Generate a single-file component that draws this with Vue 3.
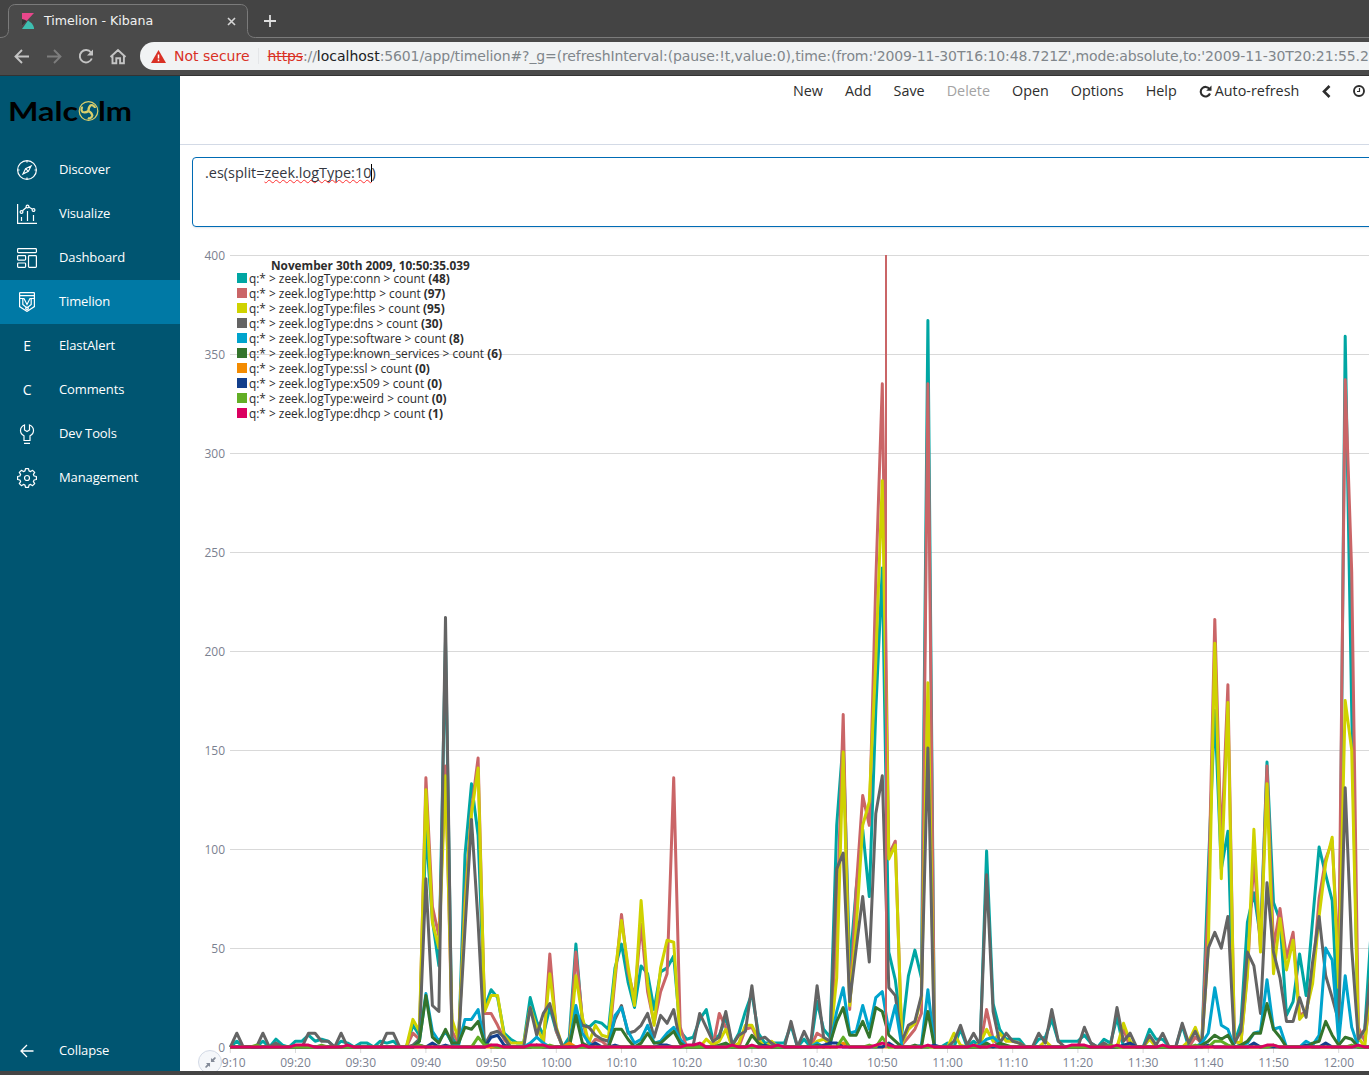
<script setup>
const links = [
  { name: 'Discover', icon: 'compass' },
  { name: 'Visualize', icon: 'chart' },
  { name: 'Dashboard', icon: 'dashboard' },
  { name: 'Timelion', icon: 'timelion', active: true },
  { name: 'ElastAlert', letter: 'E' },
  { name: 'Comments', letter: 'C' },
  { name: 'Dev Tools', icon: 'wrench' },
  { name: 'Management', icon: 'gear' },
]
const actions = ['New', 'Add', 'Save', 'Delete', 'Open', 'Options', 'Help']

// Sparse series: "minute:value" pairs counted from 09:10, everything else is zero.
const series = [
  { name: 'conn', color: '#00a6a3', n: 48, d: '1:3 5:3 7:4 8:1 10:3 11:3 12:6 13:3 14:4 15:3 17:3 18:2 20:2 21:2 23:3 24:2 25:3 28:11 29:6 30:110 31:64 32:41 33:205 34:5 36:97 37:133 38:107 39:20 40:29 41:25 42:7 43:4 44:2 45:2 46:25 47:13 48:6 49:20 50:8 52:5 53:52 54:12 55:10 56:13 57:12 58:9 59:40 60:52 61:33 62:20 63:41 64:37 65:19 66:38 67:40 68:46 69:8 70:4 71:5 72:14 73:19 74:4 75:6 76:15 77:1 78:7 79:18 80:27 81:7 82:2 83:2 84:2 85:2 86:11 88:4 90:23 91:9 92:5 93:112 94:155 95:40 96:80 97:110 98:76 99:170 100:242 101:48 102:34 103:7 104:36 105:49 106:35 107:367 110:2 112:9 114:3 116:99 117:22 118:9 119:4 120:4 121:4 124:4 125:5 126:14 127:3 128:3 129:3 130:3 131:6 132:2 134:4 135:2 136:15 138:2 141:9 142:4 143:4 146:11 149:1 150:90 151:170 152:90 153:109 154:2 155:12 156:63 157:78 158:55 159:144 160:73 161:64 162:16 163:23 164:47 165:26 166:64 167:101 168:87 169:74 170:4 171:359 172:170 173:3 174:9 175:60' },
  { name: 'http', color: '#ca6567', n: 97, d: '28:7 29:4 30:136 31:71 32:56 33:142 34:8 35:2 36:75 37:120 38:146 39:17 40:17 41:11 42:4 49:47 50:8 53:48 54:14 56:4 57:3 59:34 60:67 61:38 62:25 63:62 64:28 65:12 66:28 67:37 68:136 69:10 75:17 76:10 79:9 80:10 81:3 90:7 91:5 93:60 94:168 95:19 96:80 97:127 98:112 99:235 100:335 101:97 102:104 103:1 104:5 105:9 106:17 107:335 116:19 117:4 137:9 148:5 149:2 150:73 151:216 152:100 153:183 154:3 155:2 156:38 157:95 158:50 159:142 160:50 161:70 162:45 163:58 164:16 165:18 166:35 167:75 168:95 169:104 170:40 171:337 172:240 173:10 174:3 175:30' },
  { name: 'files', color: '#cfd200', n: 95, d: '28:14 29:8 30:130 31:63 32:50 33:137 34:14 35:4 36:70 37:118 38:141 39:18 40:26 41:26 42:6 43:2 44:2 45:2 46:20 47:10 48:3 49:37 50:10 53:36 54:15 55:2 56:11 57:6 58:5 59:37 60:64 61:41 62:21 63:74 64:32 65:11 66:40 67:54 68:53 69:3 73:4 74:1 75:3 76:9 78:2 79:11 80:11 81:4 83:3 90:3 91:4 92:2 93:35 94:149 95:21 96:60 97:112 98:124 99:195 100:286 101:95 102:102 103:2 104:9 105:12 106:25 107:184 111:7 112:1 115:2 116:9 117:3 118:7 119:3 120:3 121:2 125:3 137:12 138:3 141:4 147:3 148:10 149:1 150:50 151:204 152:85 153:174 154:3 155:2 156:36 157:110 158:48 159:133 160:37 161:65 162:39 163:54 164:14 165:18 166:32 167:66 168:93 169:106 170:30 171:175 172:150 173:5 175:40' },
  { name: 'dns', color: '#646464', n: 30, d: '1:7 5:7 7:2 12:7 13:7 14:3 15:3 17:7 24:7 25:7 28:1 29:4 30:85 31:21 32:18 33:217 34:1 35:2 36:60 37:115 38:63 39:1 40:7 41:8 42:5 46:20 47:6 48:17 49:22 50:9 52:2 53:18 54:11 55:10 56:6 57:4 58:3 59:14 60:21 61:7 62:8 63:11 64:17 65:5 66:16 67:12 68:19 69:2 71:1 72:17 73:10 74:3 75:5 76:18 77:1 78:6 79:8 80:31 81:4 82:5 83:2 86:13 88:8 89:1 90:31 91:5 92:3 93:90 94:98 95:23 96:50 97:76 98:43 99:118 100:137 101:30 102:26 103:3 104:11 105:13 106:26 107:151 111:3 112:11 113:1 114:7 115:1 116:87 117:18 118:2 119:7 120:3 121:2 124:7 125:2 126:19 127:3 131:10 132:2 134:2 136:20 137:3 138:7 141:6 142:1 143:7 146:12 147:2 148:8 149:1 150:50 151:58 152:50 153:66 154:2 155:8 156:48 157:41 158:17 159:83 160:48 161:35 162:13 163:13 164:25 165:15 166:43 167:66 168:36 169:25 170:13 171:131 172:50 173:4 174:9 175:40' },
  { name: 'software', color: '#00a4cd', n: 8, d: '29:3 30:27 31:8 32:3 33:8 34:2 35:1 36:14 37:14 38:19 39:2 46:2 47:5 48:2 53:21 54:7 55:2 59:16 60:20 61:8 62:2 63:4 64:11 65:2 66:3 67:7 68:10 69:4 90:2 92:1 93:18 94:30 95:7 96:8 97:21 98:9 99:25 100:28 101:8 102:21 106:1 107:29 115:1 116:4 117:5 118:2 149:2 150:7 151:30 152:11 153:9 155:1 156:2 157:7 158:8 159:34 160:9 161:10 165:3 166:1 167:6 168:50 169:44 170:3 171:36 172:10' },
  { name: 'known_services', color: '#34742c', n: 6, d: '29:3 30:26 31:5 32:2 33:9 34:2 35:2 36:10 37:9 38:13 39:2 53:16 54:2 59:9 60:9 61:4 63:2 64:7 65:2 66:2 67:5 68:8 69:2 75:1 76:2 80:6 81:2 90:1 92:2 93:13 94:20 95:6 96:6 97:13 98:5 99:20 100:18 101:6 102:3 105:1 107:18 116:2 118:2 119:1 149:1 150:3 151:6 152:4 153:6 155:1 156:3 157:7 158:7 159:22 160:9 161:5 166:2 167:3 168:13 169:6 170:1 171:5 172:4' },
  { name: 'ssl', color: '#f38b00', n: 0, d: '47:1 52:2 94:2' },
  { name: 'x509', color: '#133f8c', n: 0, d: '29:1 31:2 33:1 40:5 41:6 42:1 47:1 56:2 59:1 66:1 67:1 82:1 91:1 92:2 93:2 101:2 108:1 137:1 138:2 150:1 157:2 165:1 168:2' },
  { name: 'weird', color: '#62ae25', n: 0, d: '4:1 14:1 29:1 38:5 39:1 40:1 49:1 94:5 98:1 100:5 117:1 135:1 148:1 151:3 152:3 153:1 160:1 172:1' },
  { name: 'dhcp', color: '#db0060', n: 1, d: '10:1 11:1 12:1 18:1 40:1 41:1 46:1 47:1 48:1 54:1 70:1 71:1 72:2 77:1 80:1 84:1 99:1 100:2 101:1 107:1 114:1 117:1 129:1 130:1 131:1 136:1 143:1 159:1 160:1 173:1' },
]
const ticks = Array.from({ length: 18 }, (_, i) => i)
const yValues = [400, 350, 300, 250, 200, 150, 100, 50, 0]
const px = (m) => 50.3 + m * 6.52
const py = (v) => 819.5 - v * 1.98
const clock = (i) => {
  const m = 550 + i * 10
  return String(Math.floor(m / 60)).padStart(2, '0') + ':' + String(m % 60).padStart(2, '0')
}
function points(text) {
  const values = Array(176).fill(0)
  text.split(' ').forEach((p) => {
    const [m, v] = p.split(':')
    values[m] = +v
  })
  return values.map((v, m) => px(m).toFixed(1) + ',' + (py(v) - 0.4).toFixed(1)).join(' ')
}
</script>

<template>
  <div class="window">
    <header class="browser">
      <div class="tabs">
        <svg class="tab-outline" width="1369" height="38" viewBox="0 0 1369 38" fill="none">
          <path d="M0 37.500c5.500 0 8.500-2.500 8.500-8V12c0-5 2.500-7.500 7.500-7.500h224c5 0 7.500 2.500 7.500 7.500v17.500c0 5.500 3 8 8 8H1369V38H0z" fill="#4a4a4a" />
          <path d="M0 37.500c5.500 0 8.500-2.500 8.500-8V12c0-5 2.500-7.500 7.500-7.500h224c5 0 7.500 2.500 7.500 7.500v17.500c0 5.500 3 8 8 8H1369" stroke="#7b7b7b" />
        </svg>
        <svg class="favicon" width="12" height="16" viewBox="0 0 12 16"><path d="M0 0h12L0 13z" fill="#e8478b" /><path d="M0 6a16 16 0 0 1 5 2L0 13z" fill="#353535" /><path d="M6 7.500c3.500 2 6 5 6.200 8.500H0z" fill="#3ebeb0" /></svg>
        <span class="tab-title">Timelion - Kibana</span>
        <svg class="tab-close" width="9" height="9" viewBox="0 0 9 9"><path d="M1 1l7 7M8 1L1 8" stroke="#d6d6d6" stroke-width="1.600" /></svg>
        <svg class="tab-new" width="12" height="12" viewBox="0 0 12 12"><path d="M6 0v12M0 6h12" stroke="#dedede" stroke-width="1.800" /></svg>
      </div>
      <div class="toolbar">
        <svg width="128" height="18" viewBox="0 0 128 18" fill="none" stroke="#c4c4c4" stroke-width="1.900">
          <path d="M23 8.500H10M16 2L9.500 8.500 16 15" />
          <path d="M41 8.500h13M48 2l6.500 6.500L48 15" stroke="#7d7d7d" />
          <path d="M85 4.500a6.200 6.200 0 1 0 .8 6" /><path d="M87 1.500v6h-6z" fill="#c4c4c4" stroke="none" />
          <path d="M104.500 9L112 2l7.500 7M106.500 8v7.200h3.800v-5h3.800v5h3.800V8" />
        </svg>
        <div class="address">
          <svg width="15" height="13" viewBox="0 0 15 13"><path d="M7.500 0L15 13H0z" fill="#d93025" /><path d="M7.500 4.500v4M7.500 9.600v1.600" stroke="#fff" stroke-width="1.500" /></svg>
          <span class="insecure">Not secure</span>
          <i></i>
          <span class="url"><s>https</s>://<b>localhost</b>:5601/app/timelion#?_g=(refreshInterval:(pause:!t,value:0),time:(from:'2009-11-30T16:10:48.721Z',mode:absolute,to:'2009-11-30T20:21:55.2</span>
        </div>
      </div>
    </header>

    <div class="app">
      <aside class="sidebar">
        <svg class="logo" width="122" height="26" viewBox="0 0 122 26">
          <text x="-1" y="21" textLength="70" lengthAdjust="spacingAndGlyphs">Malc</text>
          <text x="89" y="21" textLength="34" lengthAdjust="spacingAndGlyphs">lm</text>
          <g transform="translate(79.500 11)" fill="none" stroke="#d9cf6c" stroke-width="1.200">
            <circle r="9.300" />
            <path v-for="a in [20, 140, 260]" :key="a" :transform="`rotate(${a})`" d="M0 0C-1-2-1-4 0-6C2-7.500 4.500-6.500 5-5" stroke-width="2.200" />
          </g>
        </svg>
        <nav>
          <a v-for="l in links" :key="l.name" :class="{ active: l.active }">
            <span class="icon" :class="{ letter: l.letter }">
              <template v-if="l.letter">{{ l.letter }}</template>
              <svg v-else width="20" height="20" viewBox="0 0 20 20" fill="none" stroke="#fff" stroke-width="1.200">
                <template v-if="l.icon === 'compass'"><circle cx="10" cy="10" r="9.400" /><path d="M14 6l-2.600 5.400L6 14l2.600-5.400zM8.600 8.600l2.800 2.800M10 .8v1.700M10 17.500v1.700M.8 10h1.700M17.500 10h1.700" /></template>
                <template v-if="l.icon === 'chart'"><path d="M.6 0v19.400H20M4.500 17v-4M10.500 17V7M16.500 17v-6M5.500 6.800l3.700-3.300M11.800 3l3.400 2" /><circle cx="4.500" cy="8" r="1.400" /><circle cx="10.500" cy="2.500" r="1.400" /><circle cx="16.500" cy="6" r="1.400" /></template>
                <template v-if="l.icon === 'dashboard'"><rect x=".6" y=".6" width="18.800" height="4" rx=".8" /><rect x=".6" y="7.600" width="8" height="4.500" rx=".8" /><rect x=".6" y="15" width="8" height="4.400" rx=".8" /><rect x="11.500" y="7.600" width="7.900" height="11.800" rx=".8" /></template>
                <template v-if="l.icon === 'timelion'"><path d="M2.600.6h14.800M2.600.6v14L10 19.400l7.400-4.800V.6M2.600 3.600h14.800M3 6.500h4l3 6 3-6h4M5.800 7v5.500l4.200 3.500 4.200-3.500V7" /><circle cx="10" cy="16.500" r="1.300" /></template>
                <template v-if="l.icon === 'wrench'"><path d="M7.500 1v5l2.500 1.500L12.500 6V1c2.500 1 4 3.200 4 5.500 0 2.500-1.500 4.300-3.500 5.300v4.700H7v-4.700c-2-1-3.500-2.800-3.500-5.300 0-2.300 1.500-4.500 4-5.500zM7 19.400h6" /></template>
                <template v-if="l.icon === 'gear'"><path d="M8.500.6h3l.5 2.300 1.600.7 2-1.300 2.100 2.100-1.300 2 .7 1.600 2.300.5v3l-2.300.5-.7 1.600 1.300 2-2.100 2.100-2-1.300-1.600.7-.5 2.300h-3L8 17.100l-1.600-.7-2 1.300-2.100-2.100 1.300-2-.7-1.600-2.300-.5v-3L2.900 8l.7-1.600-1.300-2 2.100-2.100 2 1.300L8 2.900z" stroke-linejoin="round" /><circle cx="10" cy="10" r="2.500" /></template>
              </svg>
            </span>
            <span>{{ l.name }}</span>
          </a>
        </nav>
        <a class="collapse">
          <span class="icon"><svg width="14" height="14" viewBox="0 0 14 14" fill="none" stroke="#fff" stroke-width="1.300"><path d="M13.500 7H1M7 1L1 7l6 6" /></svg></span>
          <span>Collapse</span>
        </a>
      </aside>

      <main>
        <div class="menu">
          <span v-for="a in actions" :key="a" :class="{ disabled: a === 'Delete' }">{{ a }}</span>
          <span class="refresh">
            <svg width="13" height="13" viewBox="0 0 13 13"><path d="M10.500 4A4.800 4.800 0 1 0 11 8.500" fill="none" stroke="#2d2d2d" stroke-width="2.100" /><path d="M12.500.5v5.300H7.200z" fill="#2d2d2d" /></svg>Auto-refresh
          </span>
          <svg width="9" height="13" viewBox="0 0 9 13"><path d="M7.500 1L2 6.500 7.500 12" fill="none" stroke="#2d2d2d" stroke-width="2.600" /></svg>
          <svg class="time" width="12" height="12" viewBox="0 0 12 12" fill="none" stroke="#2d2d2d"><circle cx="6" cy="6" r="5" stroke-width="1.900" /><path d="M6.500 3v3.500H4" stroke-width="1.200" /></svg>
        </div>
        <div class="expression">.es(split=<u>zeek.logType:10</u><i></i>)</div>

        <div class="plot">
          <svg width="1189" height="843" viewBox="0 0 1189 843">
            <g class="axis">
              <g v-for="v in yValues" :key="v">
                <path :d="`M50 ${py(v)}H1189`" stroke="#d9d9d9" />
                <text x="45" :y="py(v) + 4.500" text-anchor="end">{{ v }}</text>
              </g>
              <g v-for="t in ticks" :key="t">
                <path :d="`M${px(t * 10)} 820v5`" stroke="#d9d9d9" />
                <text :x="px(t * 10)" y="839" text-anchor="middle">{{ clock(t) }}</text>
              </g>
            </g>
            <polyline v-for="s in series" :key="s.name" :points="points(s.d)" fill="none" :stroke="s.color" stroke-width="3" stroke-linejoin="round" />
            <path d="M706 27V820" stroke="#ca6567" stroke-width="2" />
          </svg>
          <div class="legend">
            <strong>November 30th 2009, 10:50:35.039</strong>
            <div v-for="s in series" :key="s.name" class="entry">
              <i :style="{ background: s.color }"></i>
              <span>q:* &gt; zeek.logType:{{ s.name }} &gt; count <b>({{ s.n }})</b></span>
            </div>
          </div>
          <div class="shrink">
            <svg width="11" height="11" viewBox="0 0 12 12" fill="#848b98"><path d="M6.500 1v4.500H11L9.500 4 12 1.200 10.800 0 8 2.500zM5.500 11V6.500H1L2.500 8 0 10.800 1.200 12 4 9.500z" /></svg>
          </div>
        </div>
      </main>
    </div>
    <footer></footer>
  </div>
</template>

<style>
body { margin: 0; overflow: hidden; }
</style>

<style scoped>
.window { width: 1369px; height: 1075px; overflow: hidden; display: flex; flex-direction: column; background: #fff; font-family: "Open Sans", sans-serif; }
.browser { height: 76px; flex: none; box-sizing: border-box; background: #4a4a4a; border-bottom: 1px solid #333; font-family: "DejaVu Sans", sans-serif; }
.tabs { position: relative; height: 38px; display: flex; align-items: center; background: #444; }
.tab-outline { position: absolute; left: 0; top: 0; }
.tabs > :not(.tab-outline) { position: relative; }
.favicon { margin: 4px 0 0 22px; }
.tab-title { width: 183px; margin: 3px 0 0 10px; font-size: 12.6px; color: #f1f1f1; white-space: nowrap; }
.tab-close { margin-top: 4px; }
.tab-new { margin: 4px 0 0 28px; }
.toolbar { height: 37px; display: flex; align-items: center; }
.toolbar > svg { margin-left: 6px; flex: none; }
.address { margin-left: 6px; margin-top: -1px; flex: 1; height: 28px; min-width: 0; display: flex; align-items: center; box-sizing: border-box; padding-left: 11px; overflow: hidden; white-space: nowrap; background: #f1f3f4; border-radius: 14px 0 0 14px; font-size: 14px; color: #80868b; }
.address > * { flex: none; }
.insecure { margin-left: 8px; color: #d93025; }
.address i { width: 1px; height: 16px; margin: 0 9px 0 8px; background: #e4e6e8; }
.url { letter-spacing: -0.118px; }
.url s { color: #d93025; }
.url b { font-weight: 400; color: #202124; letter-spacing: 0; }
.app { display: flex; height: 995px; flex: none; }
.sidebar { width: 180px; flex: none; display: flex; flex-direction: column; background: #005571; color: #fff; font-size: 13px; letter-spacing: -0.12px; }
.logo { margin: 24px 0 22px 9px; overflow: visible; }
.logo text { font: 700 27px "Lato", sans-serif; fill: #000; letter-spacing: 0; }
.sidebar a { height: 44px; display: flex; align-items: center; box-sizing: border-box; padding-bottom: 2px; }
.sidebar a .icon { padding-top: 1px; }
.sidebar a .letter { padding-top: 0; font-size: 14px; }
.sidebar a.active { background: #0079a5; }
.sidebar .icon { width: 54px; display: flex; justify-content: center; margin-right: 5px; }
.sidebar .collapse { margin-top: auto; margin-bottom: -2px; }
main { flex: 1; min-width: 0; overflow: hidden; display: flex; flex-direction: column; }
.menu { height: 69px; flex: none; display: flex; align-items: flex-start; padding: 5px 0 0 613px; box-sizing: border-box; border-bottom: 1px solid #d3dae6; font-size: 14.35px; line-height: 20px; color: #2d2d2d; white-space: nowrap; }
.menu > * { flex: none; margin-right: 22px; }
.menu svg { margin-top: 4px; }
.disabled { color: #a3a3a3; }
.refresh { display: flex; gap: 3px; }
.menu .refresh { margin-right: 23px; }
.menu .time { margin-right: 0; }
.expression { flex: none; margin: 12px 0 0 12px; width: 1200px; height: 70px; box-sizing: border-box; border: 1px solid #006bb4; border-radius: 4px; padding: 4px 12px; font-size: 14.45px; line-height: 21px; color: #343741; box-shadow: 0 2px 2px -1px rgba(152, 162, 179, .3); }
.expression u { text-decoration: underline wavy #f33 1px; text-decoration-skip-ink: none; text-underline-offset: 1px; }
.expression i { display: inline-block; width: 1px; height: 18px; margin-right: -1px; vertical-align: -4px; background: #000; }
.plot { position: relative; height: 843px; overflow: hidden; margin-top: 1px; }
.plot > svg { display: block; }
.axis text { font-size: 12px; fill: #7b8190; }
.legend { position: absolute; left: 57px; top: 31px; display: flex; flex-direction: column; font-size: 11.87px; color: #2d2d2d; white-space: nowrap; }
.legend strong { margin-left: 34px; height: 12px; line-height: 13px; font-size: 11.8px; }
.entry { height: 15px; display: flex; align-items: center; gap: 2px; line-height: 15px; }
.entry i { width: 10px; height: 10px; margin-bottom: 1px; }
.shrink { position: absolute; left: 18px; top: 822px; width: 24px; height: 24px; box-sizing: border-box; border: 1px solid #d3dae6; border-radius: 50%; background: #f5f7fa; display: flex; align-items: center; justify-content: center; }
footer { height: 4px; background: #444; }
</style>
